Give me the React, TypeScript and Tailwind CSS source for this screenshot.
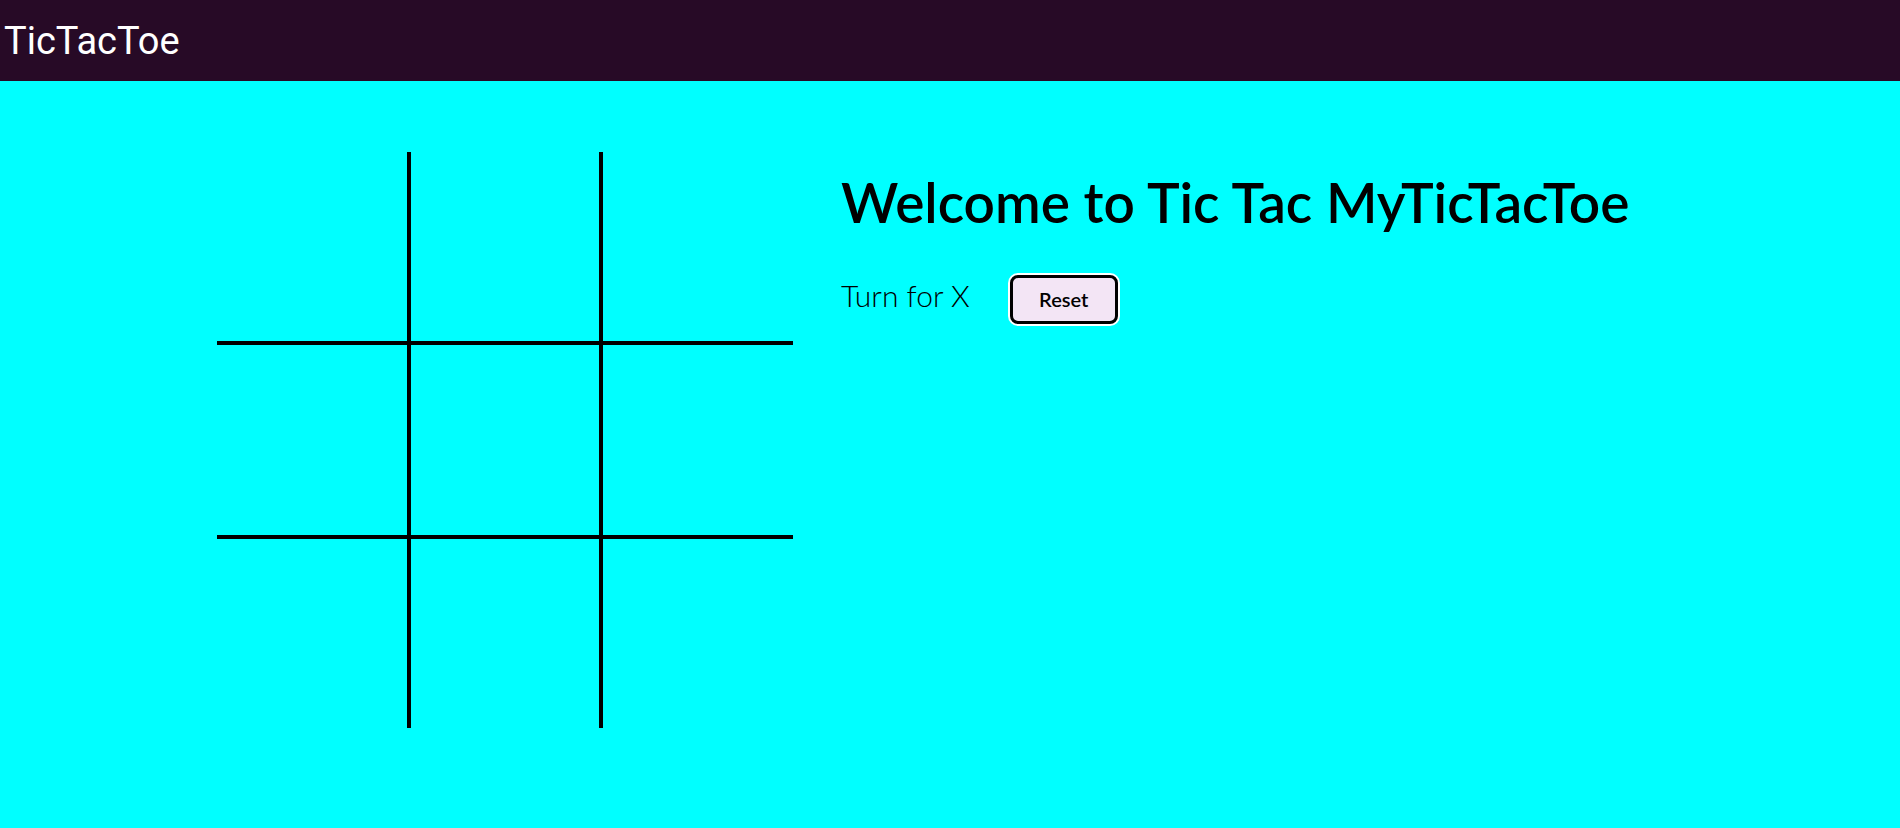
import { useState } from "react";

const cellBorders = [
  "border-r-2 border-b-2",
  "border-x-2 border-b-2",
  "border-l-2 border-b-2",
  "border-r-2 border-y-2",
  "border-2",
  "border-l-2 border-y-2",
  "border-r-2 border-t-2",
  "border-x-2 border-t-2",
  "border-l-2 border-t-2",
];

function Board({
  squares,
  onPlay,
}: {
  squares: (string | null)[];
  onPlay: (i: number) => void;
}) {
  return (
    <div className="grid grid-cols-3 w-[576px] h-[576px] shrink-0">
      {squares.map((v, i) => (
        <button
          key={i}
          onClick={() => onPlay(i)}
          className={`${cellBorders[i]} border-black bg-transparent text-7xl text-black font-['Lato',sans-serif]`}
        >
          {v}
        </button>
      ))}
    </div>
  );
}

export default function App() {
  const [squares, setSquares] = useState<(string | null)[]>(Array(9).fill(null));
  const [xNext, setXNext] = useState(true);

  const play = (i: number) => {
    if (squares[i]) return;
    const next = [...squares];
    next[i] = xNext ? "X" : "O";
    setSquares(next);
    setXNext(!xNext);
  };

  return (
    <div className="min-h-[828px] bg-[#00ffff] flex flex-col">
      <header className="h-[81px] bg-[#270a26] flex items-center px-[4px]">
        <span className="text-white text-[38px] font-['Roboto',sans-serif] leading-none">
          TicTacToe
        </span>
      </header>

      <main className="flex items-start gap-[48px] pl-[217px] pt-[71px]">
        <Board squares={squares} onPlay={play} />

        {/* right side: title, turn and reset */}
        <div className="pt-[16px] font-['Lato',sans-serif] text-black">
          <h1 className="text-[55px] font-semibold leading-tight">
            Welcome to Tic Tac MyTicTacToe
          </h1>
          <div className="flex items-center gap-[40px] mt-[36px]">
            <span className="text-[30px] font-light mb-[8px]">Turn for {xNext ? "X" : "O"}</span>
            <button
              onClick={() => {
                setSquares(Array(9).fill(null));
                setXNext(true);
              }}
              className="w-[108px] h-[49px] rounded-lg border-[3px] border-black ring-2 ring-white bg-[#f3e5f5] text-[20px] font-semibold"
            >
              Reset
            </button>
          </div>
        </div>
      </main>
    </div>
  );
}
